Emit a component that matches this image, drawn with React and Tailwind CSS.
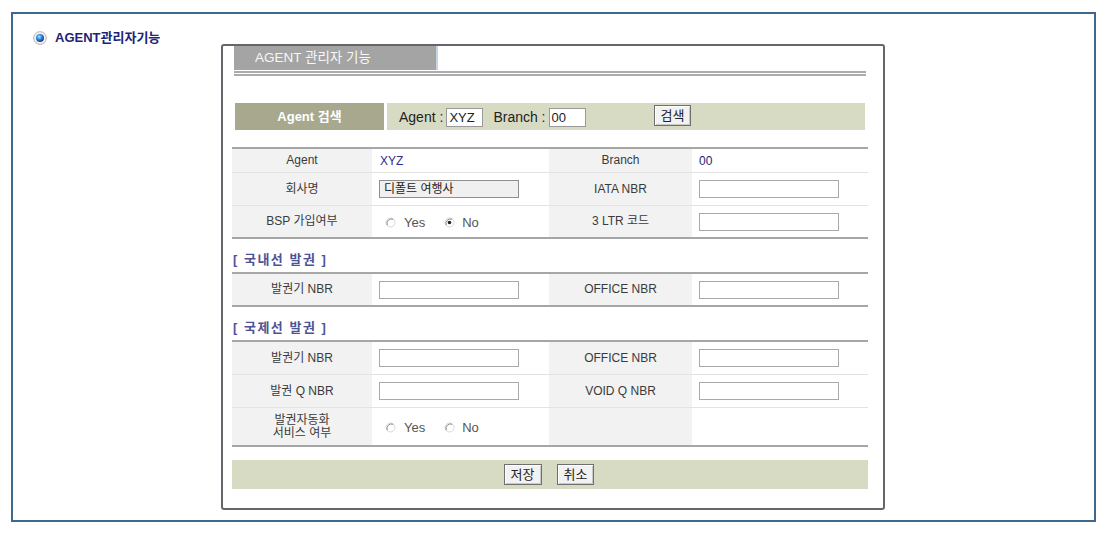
import React from "react";

const font = { fontFamily: '"Liberation Sans", "Noto Sans CJK KR", sans-serif' };

function BlueDot() {
  return (
    <svg width="14" height="14" viewBox="0 0 14 14">
      <defs>
        <radialGradient id="bd" cx="40%" cy="35%" r="65%">
          <stop offset="0%" stopColor="#b8e4ff" />
          <stop offset="45%" stopColor="#3d8fe0" />
          <stop offset="100%" stopColor="#0f3f8a" />
        </radialGradient>
      </defs>
      <circle cx="7" cy="7" r="6.3" fill="#f4f4f4" stroke="#a9a9a9" strokeWidth="0.9" />
      <circle cx="7" cy="7" r="4" fill="url(#bd)" />
    </svg>
  );
}

function Radio({ checked }) {
  return (
    <svg width="11" height="11" viewBox="0 0 11 11" className="shrink-0">
      <circle cx="5.5" cy="5.5" r="4.5" fill="#fff" stroke="#d8d8d8" strokeWidth="1" />
      <path d="M2.3 8.2 A4.5 4.5 0 0 1 8.2 2.3" fill="none" stroke="#8a8a8a" strokeWidth="1" />
      {checked && <circle cx="5.5" cy="5.5" r="1.8" fill="#222" />}
    </svg>
  );
}

function Input({ value = "", readOnly }) {
  return (
    <div
      className={
        "w-[140px] h-[18px] border px-[4px] flex items-center text-[12px] text-[#222] " +
        (readOnly ? "bg-[#f0f0f0] border-[#8f8f8f]" : "bg-white border-[#a9a9a9]")
      }
    >
      {value}
    </div>
  );
}

function Btn({ children }) {
  return (
    <div className="h-[21px] px-[6px] flex items-center border border-[#6f6f6f] bg-[#f2f2f2] text-[13px] text-[#222] shadow-[inset_1px_1px_0_#ffffff,inset_-1px_-1px_0_#c9c9c9]">
      {children}
    </div>
  );
}

function Label({ children }) {
  return (
    <div className="bg-[#f2f2f2] flex items-center justify-center text-center text-[12px] text-[#3a3a3a] leading-[13px]">
      {children}
    </div>
  );
}

function Cell({ children }) {
  return <div className="bg-white flex items-center pl-[7px] text-[12px]">{children}</div>;
}

function YesNo({ yes, no }) {
  return (
    <div className="flex items-center text-[13px] text-[#555] pl-[13px] pt-[2px]">
      <Radio checked={yes} />
      <span className="ml-[8px]">Yes</span>
      <span className="ml-[19px]"><Radio checked={no} /></span>
      <span className="ml-[7px]">No</span>
    </div>
  );
}

function Row({ h, last, children }) {
  return (
    <div
      className={
        "grid grid-cols-[140px_177px_143px_176px] " +
        (last ? "" : "border-b border-[#e3e3e3] ")
      }
      style={{ height: h }}
    >
      {children}
    </div>
  );
}

function Section({ title }) {
  return (
    <div className="h-[33px] pt-[9px] pl-[1px] flex items-center text-[13px] font-bold text-[#4f5396] tracking-[1.5px]">
      {title}
    </div>
  );
}

export default function App() {
  return (
    <div className="w-[1108px] h-[533px] bg-white pt-[12px] pl-[11px]" style={font}>
      <div className="w-[1085px] h-[510px] border-2 border-[#3f6890]">
        {/* header */}
        <div className="h-[30px] pt-[17px] pl-[20px] flex items-start gap-[8px]">
          <BlueDot />
          <span className="text-[13px] font-bold text-[#1b2478] leading-[14px]">AGENT관리자기능</span>
        </div>

        {/* panel */}
        <div className="ml-[208px] w-[664px] h-[466px] border-2 border-[#63666b] rounded-[3px] bg-white">
          <div className="ml-[11px] w-[632px]">
            <div className="h-[24px] flex">
              <div className="w-[202px] bg-[#a4a4a4] text-[13.5px] text-[#f7f7f7] pl-[21px] flex items-center">
                AGENT 관리자 기능
              </div>
              <div className="w-[2px] bg-[#c6d4e6]" />
            </div>
            <div className="mt-[1px] h-[5px] border-y-2 border-[#acacac]" />
          </div>

          {/* search */}
          <div className="mt-[27px] ml-[12px] w-[630px] h-[27px] flex gap-[3px]">
            <div className="w-[149px] bg-[#a8a88e] flex items-center justify-center text-[13px] font-bold text-white">
              Agent 검색
            </div>
            <div className="flex-1 bg-[#d8dbc4] flex items-center pl-[12px] text-[14px] text-[#222] pt-[2px]">
              <span>Agent :</span>
              <div className="ml-[3px] w-[37px] h-[19px] bg-white border border-[#9a9a9a] px-[2px] flex items-center text-[13px]">XYZ</div>
              <span className="ml-[10px]">Branch :</span>
              <div className="ml-[3px] w-[37px] h-[19px] bg-white border border-[#9a9a9a] px-[2px] flex items-center text-[13px]">00</div>
              <div className="ml-[68px] -mt-[4px]">
                <Btn>검색</Btn>
              </div>
            </div>
          </div>

          {/* table */}
          <div className="mt-[17px] ml-[9px] w-[636px]">
            <div className="border-t-2 border-b-2 border-[#a6a6a6]">
              <Row h="24px">
                <Label>Agent</Label>
                <Cell><span className="text-[#2d2d8e] pl-[1px]">XYZ</span></Cell>
                <Label>Branch</Label>
                <Cell><span className="text-[#1d1d70]">00</span></Cell>
              </Row>
              <Row h="33px">
                <Label>회사명</Label>
                <Cell><Input value="디폴트 여행사" readOnly /></Cell>
                <Label>IATA NBR</Label>
                <Cell><Input /></Cell>
              </Row>
              <Row h="31px" last>
                <Label>BSP 가입여부</Label>
                <div className="bg-white flex items-center"><YesNo no /></div>
                <Label>3 LTR 코드</Label>
                <Cell><Input /></Cell>
              </Row>
            </div>

            <Section title="[ 국내선 발권 ]" />
            <div className="border-t-2 border-b-2 border-[#a6a6a6]">
              <Row h="31px" last>
                <Label>발권기 NBR</Label>
                <Cell><Input /></Cell>
                <Label>OFFICE NBR</Label>
                <Cell><Input /></Cell>
              </Row>
            </div>

            <Section title="[ 국제선 발권 ]" />
            <div className="border-t-2 border-b-2 border-[#a6a6a6]">
              <Row h="33px">
                <Label>발권기 NBR</Label>
                <Cell><Input /></Cell>
                <Label>OFFICE NBR</Label>
                <Cell><Input /></Cell>
              </Row>
              <Row h="33px">
                <Label>발권 Q NBR</Label>
                <Cell><Input /></Cell>
                <Label>VOID Q NBR</Label>
                <Cell><Input /></Cell>
              </Row>
              <Row h="37px" last>
                <Label>발권자동화<br />서비스 여부</Label>
                <div className="bg-white flex items-center"><YesNo /></div>
                <Label></Label>
                <Cell></Cell>
              </Row>
            </div>

            <div className="mt-[13px] h-[29px] bg-[#d8dbc4] flex items-center justify-center gap-[15px] pr-[2px]">
              <Btn>저장</Btn>
              <Btn>취소</Btn>
            </div>
          </div>
        </div>
      </div>
    </div>
  );
}
